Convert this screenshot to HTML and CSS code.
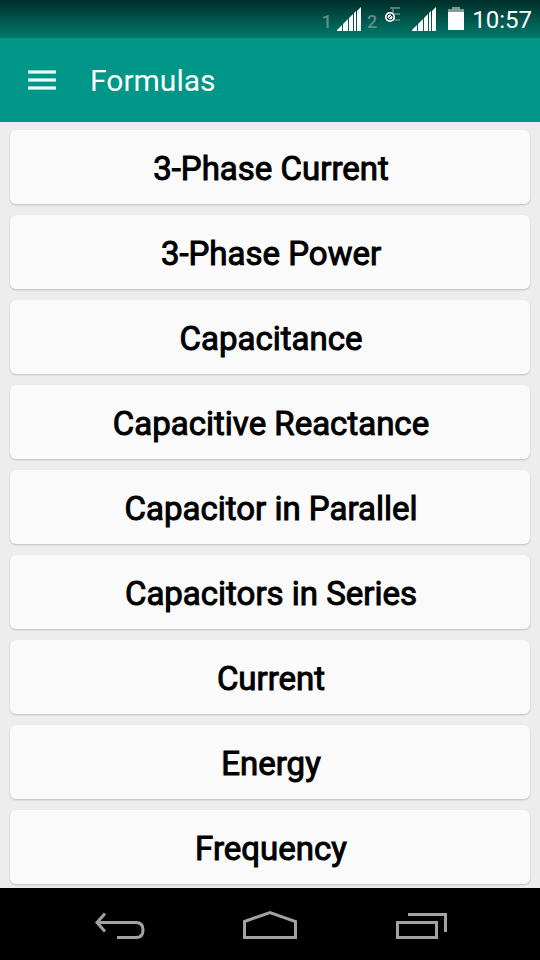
FILE: index.html
```html
<!DOCTYPE html>
<html lang="en">
<head>
<meta charset="utf-8">
<meta name="viewport" content="width=device-width, initial-scale=1">
<title>Formulas</title>
<link rel="stylesheet" href="styles.css">
</head>
<body>
<div class="screen">
  <div class="status-bar">
    <span class="sim">1</span>
    <svg class="signal" viewBox="0 0 24 24" width="24" height="24" aria-hidden="true"><path d="M0 24v-1l5-5v6zM6 24v-7l5-5v12zM12 24V11l4-4v17zM17 24V6l2-2v20zM20 24V4l4-4v24z"/></svg>
    <span class="sim">2</span>
    <svg class="network" viewBox="0 0 18 18" width="18" height="18" aria-hidden="true"><path class="network-type" d="M15 2H5M8 2V7M15 8H9M15 14H9v-4"/><circle class="network-disc" cx="5" cy="11" r="5"/><circle class="network-ring" cx="5" cy="11" r="3"/><path class="network-ring" d="M7 9l-4 4"/></svg>
    <svg class="signal" viewBox="0 0 24 24" width="24" height="24" aria-hidden="true"><path d="M0 24v-1l5-5v6zM6 24v-7l5-5v12zM12 24V11l4-4v17zM17 24V6l2-2v20zM20 24V4l4-4v24z"/></svg>
    <svg class="battery" viewBox="0 0 16 24" width="16" height="24" aria-hidden="true"><path class="battery-empty" d="M4 0h8v2h4v4H0V2h4z"/><path d="M0 5h16v18H0z"/></svg>
    <time class="clock">10:57</time>
  </div>
  <header class="app-bar">
    <button class="menu" type="button" aria-label="Menu">
      <svg viewBox="0 0 28 20" width="28" height="20" aria-hidden="true"><path class="menu-edge" d="M0 0h28v4H0zM0 8h28v4H0zM0 16h28v4H0z"/><path d="M0 1h28v2H0zM0 9h28v2H0zM0 17h28v2H0z"/></svg>
    </button>
    <h1 class="title">Formulas</h1>
  </header>
  <main class="list">
    <button class="card" type="button">3-Phase Current</button>
    <button class="card" type="button">3-Phase Power</button>
    <button class="card" type="button">Capacitance</button>
    <button class="card" type="button">Capacitive Reactance</button>
    <button class="card" type="button">Capacitor in Parallel</button>
    <button class="card" type="button">Capacitors in Series</button>
    <button class="card" type="button">Current</button>
    <button class="card" type="button">Energy</button>
    <button class="card" type="button">Frequency</button>
  </main>
  <nav class="nav-bar">
    <button class="nav-button" type="button" aria-label="Back">
      <svg viewBox="0 0 54 30" width="54" height="30" aria-hidden="true"><path d="M14 3.500L6 12.500l8 9M6 12.500h39q7 0 7 7.500t-7 7.500H26"/></svg>
    </button>
    <button class="nav-button" type="button" aria-label="Home">
      <svg viewBox="0 0 54 30" width="54" height="30" aria-hidden="true"><path d="M1.500 11.500L27 2.500l25.500 9v16h-51z"/></svg>
    </button>
    <button class="nav-button" type="button" aria-label="Recent apps">
      <svg viewBox="0 0 54 30" width="54" height="30" aria-hidden="true"><path d="M2.500 12.500h39v15h-39zM13 4.500h37.500V22"/></svg>
    </button>
  </nav>
</div>
</body>
</html>
```
FILE: styles.css
```css
* {
  box-sizing: border-box;
}

body {
  margin: 0;
  background: #ededed;
  font-family: Roboto, "Liberation Sans", sans-serif;
}

button {
  border: 0;
  padding: 0;
  font: inherit;
  cursor: pointer;
}

svg {
  display: block;
  flex: none;
}

.screen {
  display: flex;
  flex-direction: column;
  height: 100vh;
}

.status-bar {
  display: flex;
  flex: none;
  align-items: center;
  justify-content: flex-end;
  height: 38px;
  padding-right: 8px;
  background: linear-gradient(#002e2a, #007a6c);
  color: #fff;
}

.sim {
  padding-top: 4px;
  color: #5f8f89;
  font-size: 18px;
  font-weight: 500;
}

.signal {
  margin: 0 6px 0 5px;
  fill: #fff;
}

.network {
  margin: 0 4px 8px 8px;
}

.network-type {
  fill: none;
  stroke: #4d7f79;
  stroke-width: 2;
}

.network-disc {
  fill: #fff;
}

.network-ring {
  fill: none;
  stroke: #123f3a;
  stroke-width: 1;
}

.battery {
  margin: 0 8px 0 6px;
  fill: #fff;
}

.battery-empty {
  fill: #7d9f9b;
}

.clock {
  padding-top: 2px;
  font-size: 24px;
  line-height: 38px;
}

.app-bar {
  display: flex;
  flex: none;
  align-items: center;
  gap: 20px;
  height: 84px;
  padding: 0 14px;
  background: #009788;
  color: #fff;
}

.menu {
  display: grid;
  place-items: center;
  width: 56px;
  height: 56px;
  background: none;
  fill: #e6fffc;
}

.menu-edge {
  fill: #8fd3cb;
}

.title {
  margin: 0;
  padding-top: 2px;
  font-size: 30px;
  font-weight: 400;
  line-height: 36px;
}

.list {
  display: flex;
  flex: 1;
  flex-direction: column;
  gap: 11px;
  min-height: 0;
  padding: 8px 10px 0;
  overflow: hidden;
}

.card {
  flex: none;
  width: 100%;
  height: 74px;
  padding: 4px 0 0 2px;
  border-radius: 6px;
  background: #fafafa;
  box-shadow: 0 1px 2px rgba(0, 0, 0, 0.2);
  color: #000;
  font-size: 33px;
  font-weight: 400;
  -webkit-text-stroke: 1px #000;
  line-height: 40px;
  text-align: center;
}

.nav-bar {
  display: flex;
  flex: none;
  align-items: center;
  justify-content: center;
  gap: 98px;
  height: 72px;
  padding-top: 2px;
  background: #000;
}

.nav-button {
  background: none;
  fill: none;
  stroke: #a2a2a2;
  stroke-width: 3;
}
```
